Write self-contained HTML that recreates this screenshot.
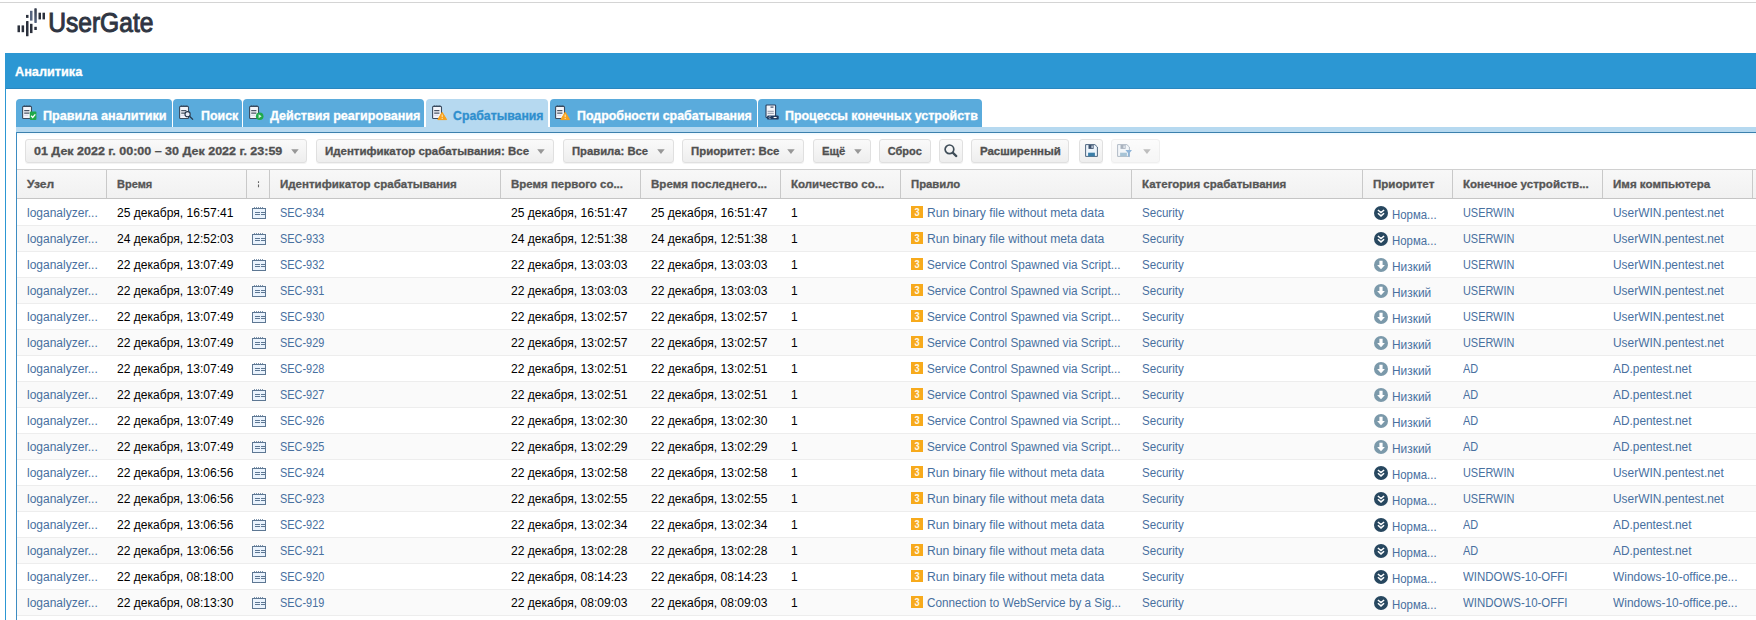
<!DOCTYPE html>
<html><head><meta charset="utf-8"><title>UserGate</title>
<style>
html,body{margin:0;padding:0;background:#fff;}
body{width:1756px;height:620px;overflow:hidden;position:relative;font-family:"Liberation Sans",sans-serif;font-size:12px;color:#000;}
div,span,svg{position:absolute;}
.t{white-space:pre;line-height:1;transform-origin:0 0;}
.tab{top:99px;height:28px;background:#5aabdc;border-radius:4px 4px 0 0;}
.tab.a{background:#b6d9f0;height:29px;}
.btn{top:139px;height:22px;border:1px solid #e0e0e0;border-radius:3px;background:linear-gradient(#fafafa,#eeeeee);box-shadow:0 1px 0 #f3f3f3;}
.btn.dis{opacity:.5;}
.sep{top:170px;width:1px;height:28px;background:#c9c9c9;}
.row{left:17px;width:1739px;height:25px;border-bottom:1px solid #ededed;background:#fff;}
.row.alt{background:#fafafa;}
.arr{width:0;height:0;border-left:3.7px solid transparent;border-right:3.7px solid transparent;border-top:4.7px solid #999;top:149.1px;}
</style></head><body>
<div style="left:0;top:2px;width:1756px;height:1px;background:#d4d4d4"></div>
<div style="left:5px;top:53px;width:1751px;height:35px;background:#2c97d3;border-bottom:1px solid #2b87bf"></div>
<div style="left:5px;top:88px;width:1px;height:532px;background:#2c97d3"></div>
<div style="left:16px;top:127px;width:1740px;height:5px;background:#b6d9f0"></div>
<div style="left:16px;top:132px;width:1740px;height:1px;background:#3b80ad"></div>
<div style="left:17px;top:133px;width:1739px;height:3px;background:linear-gradient(#eef9ff,#fff)"></div>
<div style="left:16px;top:132px;width:1px;height:488px;background:#3d8cc2"></div>
<div style="left:17px;top:169px;width:1739px;height:1px;background:#d0d0d0"></div>
<div style="left:17px;top:170px;width:1739px;height:28px;background:linear-gradient(#f8f8f8,#f1f1f1)"></div>
<div style="left:17px;top:198px;width:1739px;height:1px;background:#c5c5c5"></div>

<svg style="left:0;top:0" width="170" height="46" viewBox="0 0 170 46">
<g fill="#2b303c"><rect x="17.5" y="25.4" width="2.5" height="6.8"/><rect x="21.6" y="25.4" width="2.5" height="6.8"/>
<rect x="26" y="21" width="2.5" height="15.3" rx=".6"/><rect x="26" y="14.9" width="2.5" height="3"/>
<rect x="30" y="23.8" width="2.5" height="9.3"/><rect x="34.3" y="26.8" width="2.5" height="3.2"/>
<rect x="38.5" y="12.7" width="2.5" height="6.7"/><rect x="42.5" y="12.7" width="2.5" height="6.7"/></g>
<rect x="30" y="10.8" width="2.5" height="9.8" fill="#56647f"/>
<linearGradient id="lg" x1="0" y1="0" x2="0" y2="1"><stop offset="0" stop-color="#343b4b"/><stop offset="1" stop-color="#56647f"/></linearGradient>
<rect x="34.3" y="8.3" width="2.5" height="14.6" rx=".6" fill="url(#lg)"/>
<text x="48.2" y="31.7" font-family="Liberation Sans, sans-serif" font-size="27" fill="#2f3542" stroke="#2f3542" stroke-width="1" textLength="105.2" lengthAdjust="spacingAndGlyphs">UserGate</text>
</svg>
<div class="tab" style="left:16.2px;width:155.8px"></div>
<div class="tab" style="left:173.3px;width:68.5px"></div>
<div class="tab" style="left:243.3px;width:181.2px"></div>
<div class="tab a" style="left:426.4px;width:121.2px"></div>
<div class="tab" style="left:549.5px;width:207.1px"></div>
<div class="tab" style="left:758.2px;width:223.6px"></div>
<svg style="left:21.8px;top:104.6px" width="18" height="18" viewBox="0 0 18 18"><g><path d="M2.2 0v1.6M4.1 0v1.6M6 0v1.6M7.9 0v1.6" stroke="#34475c" stroke-width=".9"/><rect x=".6" y="1.5" width="8.9" height="12" rx=".8" fill="#f3f5fa" stroke="#3a4b5f" stroke-width="1.1"/><path d="M2.2 5.6h5.2M2.2 8.1h5.2" stroke="#4a5565" stroke-width="1.1"/><path d="M2.2 10.3h4" stroke="#d9d6ea" stroke-width="1"/></g><rect x="7.8" y="6.6" width="6.6" height="8.5" rx="1" fill="#1fa94b"/><path d="M9.1 10.8 10.7 12.5 13.3 9.4" fill="none" stroke="#fff" stroke-width="1.3"/></svg>
<svg style="left:179px;top:104.6px" width="18" height="18" viewBox="0 0 18 18"><g><path d="M2.2 0v1.6M4.1 0v1.6M6 0v1.6M7.9 0v1.6" stroke="#34475c" stroke-width=".9"/><rect x=".6" y="1.5" width="8.9" height="12" rx=".8" fill="#f3f5fa" stroke="#3a4b5f" stroke-width="1.1"/><path d="M2.2 5.6h5.2M2.2 8.1h5.2" stroke="#4a5565" stroke-width="1.1"/><path d="M2.2 10.3h4" stroke="#d9d6ea" stroke-width="1"/></g><circle cx="8.6" cy="9.2" r="2.6" fill="#e9eef8" stroke="#26364a" stroke-width="1.1"/><path d="M10.6 11.2 14 14.6" stroke="#26364a" stroke-width="1.3"/></svg>
<svg style="left:249px;top:104.6px" width="18" height="18" viewBox="0 0 18 18"><g><path d="M2.2 0v1.6M4.1 0v1.6M6 0v1.6M7.9 0v1.6" stroke="#34475c" stroke-width=".9"/><rect x=".6" y="1.5" width="8.9" height="12" rx=".8" fill="#f3f5fa" stroke="#3a4b5f" stroke-width="1.1"/><path d="M2.2 5.6h5.2M2.2 8.1h5.2" stroke="#4a5565" stroke-width="1.1"/><path d="M2.2 10.3h4" stroke="#d9d6ea" stroke-width="1"/></g><circle cx="10.7" cy="11.3" r="3.8" fill="#1fa94b"/><path d="M9.6 9.3v4l3-2z" fill="#d9f5e2"/></svg>
<svg style="left:431.8px;top:104.6px" width="18" height="18" viewBox="0 0 18 18"><g><path d="M2.2 0v1.6M4.1 0v1.6M6 0v1.6M7.9 0v1.6" stroke="#34475c" stroke-width=".9"/><rect x=".6" y="1.5" width="8.9" height="12" rx=".8" fill="#f3f5fa" stroke="#3a4b5f" stroke-width="1.1"/><path d="M2.2 5.6h5.2M2.2 8.1h5.2" stroke="#4a5565" stroke-width="1.1"/><path d="M2.2 10.3h4" stroke="#d9d6ea" stroke-width="1"/></g><g><path d="M10.2 7.3 14.6 14.6 5.8 14.6z" fill="#f7a11c" stroke="#f7a11c" stroke-width="1" stroke-linejoin="round"/><path d="M10.2 9.6v2.6M10.2 13.1v.9" stroke="#fde3b0" stroke-width="1.1"/></g></svg>
<svg style="left:555.4px;top:104.6px" width="18" height="18" viewBox="0 0 18 18"><g><path d="M2.2 0v1.6M4.1 0v1.6M6 0v1.6M7.9 0v1.6" stroke="#34475c" stroke-width=".9"/><rect x=".6" y="1.5" width="8.9" height="12" rx=".8" fill="#f3f5fa" stroke="#3a4b5f" stroke-width="1.1"/><path d="M2.2 5.6h5.2M2.2 8.1h5.2" stroke="#4a5565" stroke-width="1.1"/><path d="M2.2 10.3h4" stroke="#d9d6ea" stroke-width="1"/></g><g><path d="M10.2 7.3 14.6 14.6 5.8 14.6z" fill="#f7a11c" stroke="#f7a11c" stroke-width="1" stroke-linejoin="round"/><path d="M10.2 9.6v2.6M10.2 13.1v.9" stroke="#fde3b0" stroke-width="1.1"/></g></svg>
<svg style="left:764.8px;top:104.2px" width="18" height="18" viewBox="0 0 18 18"><rect x="1" y="1" width="9.6" height="12.6" rx=".8" fill="#f3f5fa" stroke="#2b4160" stroke-width="1.1"/><path d="M5.5 3.1h3" stroke="#2b4160" stroke-width="1.1"/><path d="M2.6 7.3h6.2M2.6 9.3h6.2" stroke="#8e97a8" stroke-width="1"/><rect x="2.1" y="11.4" width="11.6" height="4.2" rx="1.2" fill="#1f3b60"/><path d="M8.6 13.5h3" stroke="#fff" stroke-width="1.1"/><path d="M5.6 12.6a1.1 1.1 0 1 0 0 1.9" fill="none" stroke="#aab6c8" stroke-width=".8"/></svg>
<div class="btn" style="left:25px;width:279.5px"></div>
<svg style="left:290.6px;top:149px" width="9" height="6"><path d="M.2 .2h7.5L3.95 4.9z" fill="#979797"/></svg>
<div class="btn" style="left:316.2px;width:235.6px"></div>
<svg style="left:536.8px;top:149px" width="9" height="6"><path d="M.2 .2h7.5L3.95 4.9z" fill="#979797"/></svg>
<div class="btn" style="left:563.2px;width:108.6px"></div>
<svg style="left:656.9px;top:149px" width="9" height="6"><path d="M.2 .2h7.5L3.95 4.9z" fill="#979797"/></svg>
<div class="btn" style="left:682.1px;width:119.7px"></div>
<svg style="left:787.1px;top:149px" width="9" height="6"><path d="M.2 .2h7.5L3.95 4.9z" fill="#979797"/></svg>
<div class="btn" style="left:813.2px;width:55.4px"></div>
<svg style="left:853.9px;top:149px" width="9" height="6"><path d="M.2 .2h7.5L3.95 4.9z" fill="#979797"/></svg>
<div class="btn" style="left:879.2px;width:49.6px"></div>
<div class="btn" style="left:939.4px;width:21.4px"></div>
<div class="btn" style="left:971.2px;width:96.2px"></div>
<div class="btn" style="left:1079.2px;width:21.6px"></div>
<div class="btn dis" style="left:1111.3px;width:47.0px"></div>
<svg style="left:1143.1px;top:149px;opacity:.6" width="9" height="6"><path d="M.2 .2h7.5L3.95 4.9z" fill="#979797"/></svg>
<svg style="left:944px;top:144px" width="15" height="15" viewBox="0 0 15 15"><circle cx="5.45" cy="5.35" r="4.35" fill="none" stroke="#3f4d58" stroke-width="1.7"/><path d="M8.7 8.6 12.3 12.1" stroke="#3f4d58" stroke-width="2.2" stroke-linecap="round"/></svg>
<svg style="left:1085px;top:144px" width="14" height="14" viewBox="0 0 14 14"><path d="M.6 .6h9.3l2.5 2.4v9.4h-11.8z" fill="#edf5fc" stroke="#48607a" stroke-width=".95"/><rect x="3.5" y=".9" width="5.1" height="4" fill="#3d526e"/><rect x="6.5" y="1.5" width="1.2" height="2.6" fill="#dde7f2"/><rect x="3.1" y="8.7" width="6.8" height="3.6" fill="#3a7ea8"/></svg>
<svg style="left:1117.3px;top:144px" width="17" height="15" viewBox="0 0 17 15"><g opacity=".42"><path d="M.6 .6h9.3l2.5 2.4v9.4h-11.8z" fill="#edf5fc" stroke="#48607a" stroke-width=".95"/><rect x="3.5" y=".9" width="5.1" height="4" fill="#3d526e"/><rect x="6.5" y="1.5" width="1.2" height="2.6" fill="#dde7f2"/><rect x="3.1" y="8.7" width="6.8" height="3.6" fill="#3a7ea8"/></g><path d="M8.4 6h6.6l-2.4 3.1v4.2l-1.7-1.1v-3.1z" fill="#8fb5d8"/></svg>
<svg style="left:257px;top:181px" width="4" height="7" viewBox="0 0 4 7"><path d="M1.5 .3v1.8M1.5 3.6v2.6" stroke="#666" stroke-width="1.1"/></svg>
<div class="sep" style="left:106px"></div>
<div class="sep" style="left:246px"></div>
<div class="sep" style="left:269px"></div>
<div class="sep" style="left:500px"></div>
<div class="sep" style="left:640px"></div>
<div class="sep" style="left:780px"></div>
<div class="sep" style="left:900px"></div>
<div class="sep" style="left:1131px"></div>
<div class="sep" style="left:1362px"></div>
<div class="sep" style="left:1452px"></div>
<div class="sep" style="left:1602px"></div>
<div class="sep" style="left:1752px"></div>
<div class="row" style="top:200px"></div>
<div class="row alt" style="top:226px"></div>
<div class="row" style="top:252px"></div>
<div class="row alt" style="top:278px"></div>
<div class="row" style="top:304px"></div>
<div class="row alt" style="top:330px"></div>
<div class="row" style="top:356px"></div>
<div class="row alt" style="top:382px"></div>
<div class="row" style="top:408px"></div>
<div class="row alt" style="top:434px"></div>
<div class="row" style="top:460px"></div>
<div class="row alt" style="top:486px"></div>
<div class="row" style="top:512px"></div>
<div class="row alt" style="top:538px"></div>
<div class="row" style="top:564px"></div>
<div class="row alt" style="top:590px"></div>
<div class="row" style="top:616px"></div>
<svg style="left:251px;top:207px" width="16" height="13"><g shape-rendering="crispEdges"><path d="M3.5 0v2M5.5 0v2M7.5 0v2M9.5 0v2M11.5 0v2" stroke="#7f95ad" stroke-width="1"/><rect x="1.5" y="1.5" width="13" height="10" fill="#eaf3fd" stroke="#5d7793" stroke-width="1"/><path d="M3.5 5.5h5M9.5 5.5h4M3.5 7.5h5M9.5 7.5h4" stroke="#5d7793" stroke-width="1"/></g></svg>
<svg style="left:911px;top:206px" width="12" height="12"><g><rect width="12" height="12" fill="#f7aa1c"/><text x="6.7" y="9.7" font-family="Liberation Sans, sans-serif" font-size="10.3" font-weight="bold" text-anchor="middle" fill="#fff8e6" transform="scale(.9 1)">3</text></g></svg>
<svg style="left:1374px;top:206px" width="14" height="14"><g><circle cx="7" cy="7" r="7" fill="#27475f"/><path d="M3.9 4 7 6.6 10.1 4M3.9 7.3 7 9.9 10.1 7.3" fill="none" stroke="#fff" stroke-width="1.5"/></g></svg>
<svg style="left:251px;top:233px" width="16" height="13"><g shape-rendering="crispEdges"><path d="M3.5 0v2M5.5 0v2M7.5 0v2M9.5 0v2M11.5 0v2" stroke="#7f95ad" stroke-width="1"/><rect x="1.5" y="1.5" width="13" height="10" fill="#eaf3fd" stroke="#5d7793" stroke-width="1"/><path d="M3.5 5.5h5M9.5 5.5h4M3.5 7.5h5M9.5 7.5h4" stroke="#5d7793" stroke-width="1"/></g></svg>
<svg style="left:911px;top:232px" width="12" height="12"><g><rect width="12" height="12" fill="#f7aa1c"/><text x="6.7" y="9.7" font-family="Liberation Sans, sans-serif" font-size="10.3" font-weight="bold" text-anchor="middle" fill="#fff8e6" transform="scale(.9 1)">3</text></g></svg>
<svg style="left:1374px;top:232px" width="14" height="14"><g><circle cx="7" cy="7" r="7" fill="#27475f"/><path d="M3.9 4 7 6.6 10.1 4M3.9 7.3 7 9.9 10.1 7.3" fill="none" stroke="#fff" stroke-width="1.5"/></g></svg>
<svg style="left:251px;top:259px" width="16" height="13"><g shape-rendering="crispEdges"><path d="M3.5 0v2M5.5 0v2M7.5 0v2M9.5 0v2M11.5 0v2" stroke="#7f95ad" stroke-width="1"/><rect x="1.5" y="1.5" width="13" height="10" fill="#eaf3fd" stroke="#5d7793" stroke-width="1"/><path d="M3.5 5.5h5M9.5 5.5h4M3.5 7.5h5M9.5 7.5h4" stroke="#5d7793" stroke-width="1"/></g></svg>
<svg style="left:911px;top:258px" width="12" height="12"><g><rect width="12" height="12" fill="#f7aa1c"/><text x="6.7" y="9.7" font-family="Liberation Sans, sans-serif" font-size="10.3" font-weight="bold" text-anchor="middle" fill="#fff8e6" transform="scale(.9 1)">3</text></g></svg>
<svg style="left:1374px;top:258px" width="14" height="14"><g><circle cx="7" cy="7" r="7" fill="#7b99aa"/><path d="M5.4 2.8h3.2v4.1h2.3L7 11.2 3.1 6.9h2.3z" fill="#fff"/></g></svg>
<svg style="left:251px;top:285px" width="16" height="13"><g shape-rendering="crispEdges"><path d="M3.5 0v2M5.5 0v2M7.5 0v2M9.5 0v2M11.5 0v2" stroke="#7f95ad" stroke-width="1"/><rect x="1.5" y="1.5" width="13" height="10" fill="#eaf3fd" stroke="#5d7793" stroke-width="1"/><path d="M3.5 5.5h5M9.5 5.5h4M3.5 7.5h5M9.5 7.5h4" stroke="#5d7793" stroke-width="1"/></g></svg>
<svg style="left:911px;top:284px" width="12" height="12"><g><rect width="12" height="12" fill="#f7aa1c"/><text x="6.7" y="9.7" font-family="Liberation Sans, sans-serif" font-size="10.3" font-weight="bold" text-anchor="middle" fill="#fff8e6" transform="scale(.9 1)">3</text></g></svg>
<svg style="left:1374px;top:284px" width="14" height="14"><g><circle cx="7" cy="7" r="7" fill="#7b99aa"/><path d="M5.4 2.8h3.2v4.1h2.3L7 11.2 3.1 6.9h2.3z" fill="#fff"/></g></svg>
<svg style="left:251px;top:311px" width="16" height="13"><g shape-rendering="crispEdges"><path d="M3.5 0v2M5.5 0v2M7.5 0v2M9.5 0v2M11.5 0v2" stroke="#7f95ad" stroke-width="1"/><rect x="1.5" y="1.5" width="13" height="10" fill="#eaf3fd" stroke="#5d7793" stroke-width="1"/><path d="M3.5 5.5h5M9.5 5.5h4M3.5 7.5h5M9.5 7.5h4" stroke="#5d7793" stroke-width="1"/></g></svg>
<svg style="left:911px;top:310px" width="12" height="12"><g><rect width="12" height="12" fill="#f7aa1c"/><text x="6.7" y="9.7" font-family="Liberation Sans, sans-serif" font-size="10.3" font-weight="bold" text-anchor="middle" fill="#fff8e6" transform="scale(.9 1)">3</text></g></svg>
<svg style="left:1374px;top:310px" width="14" height="14"><g><circle cx="7" cy="7" r="7" fill="#7b99aa"/><path d="M5.4 2.8h3.2v4.1h2.3L7 11.2 3.1 6.9h2.3z" fill="#fff"/></g></svg>
<svg style="left:251px;top:337px" width="16" height="13"><g shape-rendering="crispEdges"><path d="M3.5 0v2M5.5 0v2M7.5 0v2M9.5 0v2M11.5 0v2" stroke="#7f95ad" stroke-width="1"/><rect x="1.5" y="1.5" width="13" height="10" fill="#eaf3fd" stroke="#5d7793" stroke-width="1"/><path d="M3.5 5.5h5M9.5 5.5h4M3.5 7.5h5M9.5 7.5h4" stroke="#5d7793" stroke-width="1"/></g></svg>
<svg style="left:911px;top:336px" width="12" height="12"><g><rect width="12" height="12" fill="#f7aa1c"/><text x="6.7" y="9.7" font-family="Liberation Sans, sans-serif" font-size="10.3" font-weight="bold" text-anchor="middle" fill="#fff8e6" transform="scale(.9 1)">3</text></g></svg>
<svg style="left:1374px;top:336px" width="14" height="14"><g><circle cx="7" cy="7" r="7" fill="#7b99aa"/><path d="M5.4 2.8h3.2v4.1h2.3L7 11.2 3.1 6.9h2.3z" fill="#fff"/></g></svg>
<svg style="left:251px;top:363px" width="16" height="13"><g shape-rendering="crispEdges"><path d="M3.5 0v2M5.5 0v2M7.5 0v2M9.5 0v2M11.5 0v2" stroke="#7f95ad" stroke-width="1"/><rect x="1.5" y="1.5" width="13" height="10" fill="#eaf3fd" stroke="#5d7793" stroke-width="1"/><path d="M3.5 5.5h5M9.5 5.5h4M3.5 7.5h5M9.5 7.5h4" stroke="#5d7793" stroke-width="1"/></g></svg>
<svg style="left:911px;top:362px" width="12" height="12"><g><rect width="12" height="12" fill="#f7aa1c"/><text x="6.7" y="9.7" font-family="Liberation Sans, sans-serif" font-size="10.3" font-weight="bold" text-anchor="middle" fill="#fff8e6" transform="scale(.9 1)">3</text></g></svg>
<svg style="left:1374px;top:362px" width="14" height="14"><g><circle cx="7" cy="7" r="7" fill="#7b99aa"/><path d="M5.4 2.8h3.2v4.1h2.3L7 11.2 3.1 6.9h2.3z" fill="#fff"/></g></svg>
<svg style="left:251px;top:389px" width="16" height="13"><g shape-rendering="crispEdges"><path d="M3.5 0v2M5.5 0v2M7.5 0v2M9.5 0v2M11.5 0v2" stroke="#7f95ad" stroke-width="1"/><rect x="1.5" y="1.5" width="13" height="10" fill="#eaf3fd" stroke="#5d7793" stroke-width="1"/><path d="M3.5 5.5h5M9.5 5.5h4M3.5 7.5h5M9.5 7.5h4" stroke="#5d7793" stroke-width="1"/></g></svg>
<svg style="left:911px;top:388px" width="12" height="12"><g><rect width="12" height="12" fill="#f7aa1c"/><text x="6.7" y="9.7" font-family="Liberation Sans, sans-serif" font-size="10.3" font-weight="bold" text-anchor="middle" fill="#fff8e6" transform="scale(.9 1)">3</text></g></svg>
<svg style="left:1374px;top:388px" width="14" height="14"><g><circle cx="7" cy="7" r="7" fill="#7b99aa"/><path d="M5.4 2.8h3.2v4.1h2.3L7 11.2 3.1 6.9h2.3z" fill="#fff"/></g></svg>
<svg style="left:251px;top:415px" width="16" height="13"><g shape-rendering="crispEdges"><path d="M3.5 0v2M5.5 0v2M7.5 0v2M9.5 0v2M11.5 0v2" stroke="#7f95ad" stroke-width="1"/><rect x="1.5" y="1.5" width="13" height="10" fill="#eaf3fd" stroke="#5d7793" stroke-width="1"/><path d="M3.5 5.5h5M9.5 5.5h4M3.5 7.5h5M9.5 7.5h4" stroke="#5d7793" stroke-width="1"/></g></svg>
<svg style="left:911px;top:414px" width="12" height="12"><g><rect width="12" height="12" fill="#f7aa1c"/><text x="6.7" y="9.7" font-family="Liberation Sans, sans-serif" font-size="10.3" font-weight="bold" text-anchor="middle" fill="#fff8e6" transform="scale(.9 1)">3</text></g></svg>
<svg style="left:1374px;top:414px" width="14" height="14"><g><circle cx="7" cy="7" r="7" fill="#7b99aa"/><path d="M5.4 2.8h3.2v4.1h2.3L7 11.2 3.1 6.9h2.3z" fill="#fff"/></g></svg>
<svg style="left:251px;top:441px" width="16" height="13"><g shape-rendering="crispEdges"><path d="M3.5 0v2M5.5 0v2M7.5 0v2M9.5 0v2M11.5 0v2" stroke="#7f95ad" stroke-width="1"/><rect x="1.5" y="1.5" width="13" height="10" fill="#eaf3fd" stroke="#5d7793" stroke-width="1"/><path d="M3.5 5.5h5M9.5 5.5h4M3.5 7.5h5M9.5 7.5h4" stroke="#5d7793" stroke-width="1"/></g></svg>
<svg style="left:911px;top:440px" width="12" height="12"><g><rect width="12" height="12" fill="#f7aa1c"/><text x="6.7" y="9.7" font-family="Liberation Sans, sans-serif" font-size="10.3" font-weight="bold" text-anchor="middle" fill="#fff8e6" transform="scale(.9 1)">3</text></g></svg>
<svg style="left:1374px;top:440px" width="14" height="14"><g><circle cx="7" cy="7" r="7" fill="#7b99aa"/><path d="M5.4 2.8h3.2v4.1h2.3L7 11.2 3.1 6.9h2.3z" fill="#fff"/></g></svg>
<svg style="left:251px;top:467px" width="16" height="13"><g shape-rendering="crispEdges"><path d="M3.5 0v2M5.5 0v2M7.5 0v2M9.5 0v2M11.5 0v2" stroke="#7f95ad" stroke-width="1"/><rect x="1.5" y="1.5" width="13" height="10" fill="#eaf3fd" stroke="#5d7793" stroke-width="1"/><path d="M3.5 5.5h5M9.5 5.5h4M3.5 7.5h5M9.5 7.5h4" stroke="#5d7793" stroke-width="1"/></g></svg>
<svg style="left:911px;top:466px" width="12" height="12"><g><rect width="12" height="12" fill="#f7aa1c"/><text x="6.7" y="9.7" font-family="Liberation Sans, sans-serif" font-size="10.3" font-weight="bold" text-anchor="middle" fill="#fff8e6" transform="scale(.9 1)">3</text></g></svg>
<svg style="left:1374px;top:466px" width="14" height="14"><g><circle cx="7" cy="7" r="7" fill="#27475f"/><path d="M3.9 4 7 6.6 10.1 4M3.9 7.3 7 9.9 10.1 7.3" fill="none" stroke="#fff" stroke-width="1.5"/></g></svg>
<svg style="left:251px;top:493px" width="16" height="13"><g shape-rendering="crispEdges"><path d="M3.5 0v2M5.5 0v2M7.5 0v2M9.5 0v2M11.5 0v2" stroke="#7f95ad" stroke-width="1"/><rect x="1.5" y="1.5" width="13" height="10" fill="#eaf3fd" stroke="#5d7793" stroke-width="1"/><path d="M3.5 5.5h5M9.5 5.5h4M3.5 7.5h5M9.5 7.5h4" stroke="#5d7793" stroke-width="1"/></g></svg>
<svg style="left:911px;top:492px" width="12" height="12"><g><rect width="12" height="12" fill="#f7aa1c"/><text x="6.7" y="9.7" font-family="Liberation Sans, sans-serif" font-size="10.3" font-weight="bold" text-anchor="middle" fill="#fff8e6" transform="scale(.9 1)">3</text></g></svg>
<svg style="left:1374px;top:492px" width="14" height="14"><g><circle cx="7" cy="7" r="7" fill="#27475f"/><path d="M3.9 4 7 6.6 10.1 4M3.9 7.3 7 9.9 10.1 7.3" fill="none" stroke="#fff" stroke-width="1.5"/></g></svg>
<svg style="left:251px;top:519px" width="16" height="13"><g shape-rendering="crispEdges"><path d="M3.5 0v2M5.5 0v2M7.5 0v2M9.5 0v2M11.5 0v2" stroke="#7f95ad" stroke-width="1"/><rect x="1.5" y="1.5" width="13" height="10" fill="#eaf3fd" stroke="#5d7793" stroke-width="1"/><path d="M3.5 5.5h5M9.5 5.5h4M3.5 7.5h5M9.5 7.5h4" stroke="#5d7793" stroke-width="1"/></g></svg>
<svg style="left:911px;top:518px" width="12" height="12"><g><rect width="12" height="12" fill="#f7aa1c"/><text x="6.7" y="9.7" font-family="Liberation Sans, sans-serif" font-size="10.3" font-weight="bold" text-anchor="middle" fill="#fff8e6" transform="scale(.9 1)">3</text></g></svg>
<svg style="left:1374px;top:518px" width="14" height="14"><g><circle cx="7" cy="7" r="7" fill="#27475f"/><path d="M3.9 4 7 6.6 10.1 4M3.9 7.3 7 9.9 10.1 7.3" fill="none" stroke="#fff" stroke-width="1.5"/></g></svg>
<svg style="left:251px;top:545px" width="16" height="13"><g shape-rendering="crispEdges"><path d="M3.5 0v2M5.5 0v2M7.5 0v2M9.5 0v2M11.5 0v2" stroke="#7f95ad" stroke-width="1"/><rect x="1.5" y="1.5" width="13" height="10" fill="#eaf3fd" stroke="#5d7793" stroke-width="1"/><path d="M3.5 5.5h5M9.5 5.5h4M3.5 7.5h5M9.5 7.5h4" stroke="#5d7793" stroke-width="1"/></g></svg>
<svg style="left:911px;top:544px" width="12" height="12"><g><rect width="12" height="12" fill="#f7aa1c"/><text x="6.7" y="9.7" font-family="Liberation Sans, sans-serif" font-size="10.3" font-weight="bold" text-anchor="middle" fill="#fff8e6" transform="scale(.9 1)">3</text></g></svg>
<svg style="left:1374px;top:544px" width="14" height="14"><g><circle cx="7" cy="7" r="7" fill="#27475f"/><path d="M3.9 4 7 6.6 10.1 4M3.9 7.3 7 9.9 10.1 7.3" fill="none" stroke="#fff" stroke-width="1.5"/></g></svg>
<svg style="left:251px;top:571px" width="16" height="13"><g shape-rendering="crispEdges"><path d="M3.5 0v2M5.5 0v2M7.5 0v2M9.5 0v2M11.5 0v2" stroke="#7f95ad" stroke-width="1"/><rect x="1.5" y="1.5" width="13" height="10" fill="#eaf3fd" stroke="#5d7793" stroke-width="1"/><path d="M3.5 5.5h5M9.5 5.5h4M3.5 7.5h5M9.5 7.5h4" stroke="#5d7793" stroke-width="1"/></g></svg>
<svg style="left:911px;top:570px" width="12" height="12"><g><rect width="12" height="12" fill="#f7aa1c"/><text x="6.7" y="9.7" font-family="Liberation Sans, sans-serif" font-size="10.3" font-weight="bold" text-anchor="middle" fill="#fff8e6" transform="scale(.9 1)">3</text></g></svg>
<svg style="left:1374px;top:570px" width="14" height="14"><g><circle cx="7" cy="7" r="7" fill="#27475f"/><path d="M3.9 4 7 6.6 10.1 4M3.9 7.3 7 9.9 10.1 7.3" fill="none" stroke="#fff" stroke-width="1.5"/></g></svg>
<svg style="left:251px;top:597px" width="16" height="13"><g shape-rendering="crispEdges"><path d="M3.5 0v2M5.5 0v2M7.5 0v2M9.5 0v2M11.5 0v2" stroke="#7f95ad" stroke-width="1"/><rect x="1.5" y="1.5" width="13" height="10" fill="#eaf3fd" stroke="#5d7793" stroke-width="1"/><path d="M3.5 5.5h5M9.5 5.5h4M3.5 7.5h5M9.5 7.5h4" stroke="#5d7793" stroke-width="1"/></g></svg>
<svg style="left:911px;top:596px" width="12" height="12"><g><rect width="12" height="12" fill="#f7aa1c"/><text x="6.7" y="9.7" font-family="Liberation Sans, sans-serif" font-size="10.3" font-weight="bold" text-anchor="middle" fill="#fff8e6" transform="scale(.9 1)">3</text></g></svg>
<svg style="left:1374px;top:596px" width="14" height="14"><g><circle cx="7" cy="7" r="7" fill="#27475f"/><path d="M3.9 4 7 6.6 10.1 4M3.9 7.3 7 9.9 10.1 7.3" fill="none" stroke="#fff" stroke-width="1.5"/></g></svg>
<span class="t" style="left:14.80px;top:66px;font-size:12px;color:#ffffff;font-weight:bold;-webkit-text-stroke:.3px;transform:scaleX(1.0593);">Аналитика</span>
<span class="t" style="left:43.25px;top:110px;font-size:12px;color:#ffffff;font-weight:bold;-webkit-text-stroke:.3px;transform:scaleX(1.0537);">Правила аналитики</span>
<span class="t" style="left:200.50px;top:110px;font-size:12px;color:#ffffff;font-weight:bold;-webkit-text-stroke:.3px;transform:scaleX(1.0357);">Поиск</span>
<span class="t" style="left:270.00px;top:110px;font-size:12px;color:#ffffff;font-weight:bold;-webkit-text-stroke:.3px;transform:scaleX(1.0465);">Действия реагирования</span>
<span class="t" style="left:453.00px;top:110px;font-size:12px;color:#2f8fce;font-weight:bold;-webkit-text-stroke:.3px;transform:scaleX(1.0242);">Срабатывания</span>
<span class="t" style="left:577.00px;top:110px;font-size:12px;color:#ffffff;font-weight:bold;-webkit-text-stroke:.3px;transform:scaleX(1.0308);">Подробности срабатывания</span>
<span class="t" style="left:785.00px;top:110px;font-size:12px;color:#ffffff;font-weight:bold;-webkit-text-stroke:.3px;transform:scaleX(1.0350);">Процессы конечных устройств</span>
<span class="t" style="left:33.50px;top:146px;font-size:11px;color:#505050;font-weight:bold;-webkit-text-stroke:.3px;transform:scaleX(1.1357);">01 Дек 2022 г. 00:00 – 30 Дек 2022 г. 23:59</span>
<span class="t" style="left:325.00px;top:146px;font-size:11px;color:#505050;font-weight:bold;-webkit-text-stroke:.3px;transform:scaleX(1.0429);">Идентификатор срабатывания: Все</span>
<span class="t" style="left:572.00px;top:146px;font-size:11px;color:#505050;font-weight:bold;-webkit-text-stroke:.3px;transform:scaleX(1.0238);">Правила: Все</span>
<span class="t" style="left:690.75px;top:146px;font-size:11px;color:#505050;font-weight:bold;-webkit-text-stroke:.3px;transform:scaleX(1.0360);">Приоритет: Все</span>
<span class="t" style="left:822.00px;top:146px;font-size:11px;color:#505050;font-weight:bold;-webkit-text-stroke:.3px;transform:scaleX(1.0242);">Ещё</span>
<span class="t" style="left:887.75px;top:146px;font-size:11px;color:#505050;font-weight:bold;-webkit-text-stroke:.3px;">Сброс</span>
<span class="t" style="left:980.00px;top:146px;font-size:11px;color:#505050;font-weight:bold;-webkit-text-stroke:.3px;transform:scaleX(1.0407);">Расширенный</span>
<span class="t" style="left:26.50px;top:179px;font-size:11px;color:#565656;font-weight:bold;-webkit-text-stroke:.3px;transform:scaleX(1.0936);">Узел</span>
<span class="t" style="left:117.00px;top:179px;font-size:11px;color:#565656;font-weight:bold;-webkit-text-stroke:.3px;">Время</span>
<span class="t" style="left:279.80px;top:179px;font-size:11px;color:#565656;font-weight:bold;-webkit-text-stroke:.3px;transform:scaleX(1.0476);">Идентификатор срабатывания</span>
<span class="t" style="left:511.00px;top:179px;font-size:11px;color:#565656;font-weight:bold;-webkit-text-stroke:.3px;transform:scaleX(1.0438);">Время первого со...</span>
<span class="t" style="left:651.00px;top:179px;font-size:11px;color:#565656;font-weight:bold;-webkit-text-stroke:.3px;transform:scaleX(1.0490);">Время последнего...</span>
<span class="t" style="left:790.90px;top:179px;font-size:11px;color:#565656;font-weight:bold;-webkit-text-stroke:.3px;transform:scaleX(1.0463);">Количество со...</span>
<span class="t" style="left:911.00px;top:179px;font-size:11px;color:#565656;font-weight:bold;-webkit-text-stroke:.3px;transform:scaleX(1.0304);">Правило</span>
<span class="t" style="left:1142.00px;top:179px;font-size:11px;color:#565656;font-weight:bold;-webkit-text-stroke:.3px;transform:scaleX(1.0472);">Категория срабатывания</span>
<span class="t" style="left:1373.00px;top:179px;font-size:11px;color:#565656;font-weight:bold;-webkit-text-stroke:.3px;transform:scaleX(1.0507);">Приоритет</span>
<span class="t" style="left:1463.00px;top:179px;font-size:11px;color:#565656;font-weight:bold;-webkit-text-stroke:.3px;transform:scaleX(1.0497);">Конечное устройств...</span>
<span class="t" style="left:1613.00px;top:179px;font-size:11px;color:#565656;font-weight:bold;-webkit-text-stroke:.3px;transform:scaleX(1.0522);">Имя компьютера</span>
<span class="t" style="left:27.00px;top:207px;font-size:12px;color:#48709f;">loganalyzer...</span>
<span class="t" style="left:116.90px;top:207px;font-size:12px;color:#000;transform:scaleX(1.0057);">25 декабря, 16:57:41</span>
<span class="t" style="left:279.70px;top:207px;font-size:12px;color:#48709f;transform:scaleX(0.9096);">SEC-934</span>
<span class="t" style="left:511.00px;top:207px;font-size:12px;color:#000;transform:scaleX(1.0057);">25 декабря, 16:51:47</span>
<span class="t" style="left:651.00px;top:207px;font-size:12px;color:#000;transform:scaleX(1.0057);">25 декабря, 16:51:47</span>
<span class="t" style="left:791.00px;top:207px;font-size:12px;color:#000;">1</span>
<span class="t" style="left:926.70px;top:207px;font-size:12px;color:#48709f;transform:scaleX(1.0145);">Run binary file without meta data</span>
<span class="t" style="left:1142.00px;top:207px;font-size:12px;color:#48709f;transform:scaleX(0.9640);">Security</span>
<span class="t" style="left:1392.00px;top:209px;font-size:12px;color:#48709f;transform:scaleX(0.9499);">Норма...</span>
<span class="t" style="left:1462.90px;top:207px;font-size:12px;color:#48709f;transform:scaleX(0.9087);">USERWIN</span>
<span class="t" style="left:1612.90px;top:207px;font-size:12px;color:#48709f;transform:scaleX(0.9948);">UserWIN.pentest.net</span>
<span class="t" style="left:27.00px;top:233px;font-size:12px;color:#48709f;">loganalyzer...</span>
<span class="t" style="left:116.90px;top:233px;font-size:12px;color:#000;transform:scaleX(1.0057);">24 декабря, 12:52:03</span>
<span class="t" style="left:279.70px;top:233px;font-size:12px;color:#48709f;transform:scaleX(0.9096);">SEC-933</span>
<span class="t" style="left:511.00px;top:233px;font-size:12px;color:#000;transform:scaleX(1.0057);">24 декабря, 12:51:38</span>
<span class="t" style="left:651.00px;top:233px;font-size:12px;color:#000;transform:scaleX(1.0057);">24 декабря, 12:51:38</span>
<span class="t" style="left:791.00px;top:233px;font-size:12px;color:#000;">1</span>
<span class="t" style="left:926.70px;top:233px;font-size:12px;color:#48709f;transform:scaleX(1.0145);">Run binary file without meta data</span>
<span class="t" style="left:1142.00px;top:233px;font-size:12px;color:#48709f;transform:scaleX(0.9640);">Security</span>
<span class="t" style="left:1392.00px;top:235px;font-size:12px;color:#48709f;transform:scaleX(0.9499);">Норма...</span>
<span class="t" style="left:1462.90px;top:233px;font-size:12px;color:#48709f;transform:scaleX(0.9087);">USERWIN</span>
<span class="t" style="left:1612.90px;top:233px;font-size:12px;color:#48709f;transform:scaleX(0.9948);">UserWIN.pentest.net</span>
<span class="t" style="left:27.00px;top:259px;font-size:12px;color:#48709f;">loganalyzer...</span>
<span class="t" style="left:116.90px;top:259px;font-size:12px;color:#000;transform:scaleX(1.0057);">22 декабря, 13:07:49</span>
<span class="t" style="left:279.70px;top:259px;font-size:12px;color:#48709f;transform:scaleX(0.9096);">SEC-932</span>
<span class="t" style="left:511.00px;top:259px;font-size:12px;color:#000;transform:scaleX(1.0057);">22 декабря, 13:03:03</span>
<span class="t" style="left:651.00px;top:259px;font-size:12px;color:#000;transform:scaleX(1.0057);">22 декабря, 13:03:03</span>
<span class="t" style="left:791.00px;top:259px;font-size:12px;color:#000;">1</span>
<span class="t" style="left:926.70px;top:259px;font-size:12px;color:#48709f;transform:scaleX(0.9771);">Service Control Spawned via Script...</span>
<span class="t" style="left:1142.00px;top:259px;font-size:12px;color:#48709f;transform:scaleX(0.9640);">Security</span>
<span class="t" style="left:1392.00px;top:261px;font-size:12px;color:#48709f;transform:scaleX(0.9916);">Низкий</span>
<span class="t" style="left:1462.90px;top:259px;font-size:12px;color:#48709f;transform:scaleX(0.9087);">USERWIN</span>
<span class="t" style="left:1612.90px;top:259px;font-size:12px;color:#48709f;transform:scaleX(0.9948);">UserWIN.pentest.net</span>
<span class="t" style="left:27.00px;top:285px;font-size:12px;color:#48709f;">loganalyzer...</span>
<span class="t" style="left:116.90px;top:285px;font-size:12px;color:#000;transform:scaleX(1.0057);">22 декабря, 13:07:49</span>
<span class="t" style="left:279.70px;top:285px;font-size:12px;color:#48709f;transform:scaleX(0.9096);">SEC-931</span>
<span class="t" style="left:511.00px;top:285px;font-size:12px;color:#000;transform:scaleX(1.0057);">22 декабря, 13:03:03</span>
<span class="t" style="left:651.00px;top:285px;font-size:12px;color:#000;transform:scaleX(1.0057);">22 декабря, 13:03:03</span>
<span class="t" style="left:791.00px;top:285px;font-size:12px;color:#000;">1</span>
<span class="t" style="left:926.70px;top:285px;font-size:12px;color:#48709f;transform:scaleX(0.9771);">Service Control Spawned via Script...</span>
<span class="t" style="left:1142.00px;top:285px;font-size:12px;color:#48709f;transform:scaleX(0.9640);">Security</span>
<span class="t" style="left:1392.00px;top:287px;font-size:12px;color:#48709f;transform:scaleX(0.9916);">Низкий</span>
<span class="t" style="left:1462.90px;top:285px;font-size:12px;color:#48709f;transform:scaleX(0.9087);">USERWIN</span>
<span class="t" style="left:1612.90px;top:285px;font-size:12px;color:#48709f;transform:scaleX(0.9948);">UserWIN.pentest.net</span>
<span class="t" style="left:27.00px;top:311px;font-size:12px;color:#48709f;">loganalyzer...</span>
<span class="t" style="left:116.90px;top:311px;font-size:12px;color:#000;transform:scaleX(1.0057);">22 декабря, 13:07:49</span>
<span class="t" style="left:279.70px;top:311px;font-size:12px;color:#48709f;transform:scaleX(0.9096);">SEC-930</span>
<span class="t" style="left:511.00px;top:311px;font-size:12px;color:#000;transform:scaleX(1.0057);">22 декабря, 13:02:57</span>
<span class="t" style="left:651.00px;top:311px;font-size:12px;color:#000;transform:scaleX(1.0057);">22 декабря, 13:02:57</span>
<span class="t" style="left:791.00px;top:311px;font-size:12px;color:#000;">1</span>
<span class="t" style="left:926.70px;top:311px;font-size:12px;color:#48709f;transform:scaleX(0.9771);">Service Control Spawned via Script...</span>
<span class="t" style="left:1142.00px;top:311px;font-size:12px;color:#48709f;transform:scaleX(0.9640);">Security</span>
<span class="t" style="left:1392.00px;top:313px;font-size:12px;color:#48709f;transform:scaleX(0.9916);">Низкий</span>
<span class="t" style="left:1462.90px;top:311px;font-size:12px;color:#48709f;transform:scaleX(0.9087);">USERWIN</span>
<span class="t" style="left:1612.90px;top:311px;font-size:12px;color:#48709f;transform:scaleX(0.9948);">UserWIN.pentest.net</span>
<span class="t" style="left:27.00px;top:337px;font-size:12px;color:#48709f;">loganalyzer...</span>
<span class="t" style="left:116.90px;top:337px;font-size:12px;color:#000;transform:scaleX(1.0057);">22 декабря, 13:07:49</span>
<span class="t" style="left:279.70px;top:337px;font-size:12px;color:#48709f;transform:scaleX(0.9096);">SEC-929</span>
<span class="t" style="left:511.00px;top:337px;font-size:12px;color:#000;transform:scaleX(1.0057);">22 декабря, 13:02:57</span>
<span class="t" style="left:651.00px;top:337px;font-size:12px;color:#000;transform:scaleX(1.0057);">22 декабря, 13:02:57</span>
<span class="t" style="left:791.00px;top:337px;font-size:12px;color:#000;">1</span>
<span class="t" style="left:926.70px;top:337px;font-size:12px;color:#48709f;transform:scaleX(0.9771);">Service Control Spawned via Script...</span>
<span class="t" style="left:1142.00px;top:337px;font-size:12px;color:#48709f;transform:scaleX(0.9640);">Security</span>
<span class="t" style="left:1392.00px;top:339px;font-size:12px;color:#48709f;transform:scaleX(0.9916);">Низкий</span>
<span class="t" style="left:1462.90px;top:337px;font-size:12px;color:#48709f;transform:scaleX(0.9087);">USERWIN</span>
<span class="t" style="left:1612.90px;top:337px;font-size:12px;color:#48709f;transform:scaleX(0.9948);">UserWIN.pentest.net</span>
<span class="t" style="left:27.00px;top:363px;font-size:12px;color:#48709f;">loganalyzer...</span>
<span class="t" style="left:116.90px;top:363px;font-size:12px;color:#000;transform:scaleX(1.0057);">22 декабря, 13:07:49</span>
<span class="t" style="left:279.70px;top:363px;font-size:12px;color:#48709f;transform:scaleX(0.9096);">SEC-928</span>
<span class="t" style="left:511.00px;top:363px;font-size:12px;color:#000;transform:scaleX(1.0057);">22 декабря, 13:02:51</span>
<span class="t" style="left:651.00px;top:363px;font-size:12px;color:#000;transform:scaleX(1.0057);">22 декабря, 13:02:51</span>
<span class="t" style="left:791.00px;top:363px;font-size:12px;color:#000;">1</span>
<span class="t" style="left:926.70px;top:363px;font-size:12px;color:#48709f;transform:scaleX(0.9771);">Service Control Spawned via Script...</span>
<span class="t" style="left:1142.00px;top:363px;font-size:12px;color:#48709f;transform:scaleX(0.9640);">Security</span>
<span class="t" style="left:1392.00px;top:365px;font-size:12px;color:#48709f;transform:scaleX(0.9916);">Низкий</span>
<span class="t" style="left:1462.90px;top:363px;font-size:12px;color:#48709f;transform:scaleX(0.9117);">AD</span>
<span class="t" style="left:1612.90px;top:363px;font-size:12px;color:#48709f;transform:scaleX(0.9888);">AD.pentest.net</span>
<span class="t" style="left:27.00px;top:389px;font-size:12px;color:#48709f;">loganalyzer...</span>
<span class="t" style="left:116.90px;top:389px;font-size:12px;color:#000;transform:scaleX(1.0057);">22 декабря, 13:07:49</span>
<span class="t" style="left:279.70px;top:389px;font-size:12px;color:#48709f;transform:scaleX(0.9096);">SEC-927</span>
<span class="t" style="left:511.00px;top:389px;font-size:12px;color:#000;transform:scaleX(1.0057);">22 декабря, 13:02:51</span>
<span class="t" style="left:651.00px;top:389px;font-size:12px;color:#000;transform:scaleX(1.0057);">22 декабря, 13:02:51</span>
<span class="t" style="left:791.00px;top:389px;font-size:12px;color:#000;">1</span>
<span class="t" style="left:926.70px;top:389px;font-size:12px;color:#48709f;transform:scaleX(0.9771);">Service Control Spawned via Script...</span>
<span class="t" style="left:1142.00px;top:389px;font-size:12px;color:#48709f;transform:scaleX(0.9640);">Security</span>
<span class="t" style="left:1392.00px;top:391px;font-size:12px;color:#48709f;transform:scaleX(0.9916);">Низкий</span>
<span class="t" style="left:1462.90px;top:389px;font-size:12px;color:#48709f;transform:scaleX(0.9117);">AD</span>
<span class="t" style="left:1612.90px;top:389px;font-size:12px;color:#48709f;transform:scaleX(0.9888);">AD.pentest.net</span>
<span class="t" style="left:27.00px;top:415px;font-size:12px;color:#48709f;">loganalyzer...</span>
<span class="t" style="left:116.90px;top:415px;font-size:12px;color:#000;transform:scaleX(1.0057);">22 декабря, 13:07:49</span>
<span class="t" style="left:279.70px;top:415px;font-size:12px;color:#48709f;transform:scaleX(0.9096);">SEC-926</span>
<span class="t" style="left:511.00px;top:415px;font-size:12px;color:#000;transform:scaleX(1.0057);">22 декабря, 13:02:30</span>
<span class="t" style="left:651.00px;top:415px;font-size:12px;color:#000;transform:scaleX(1.0057);">22 декабря, 13:02:30</span>
<span class="t" style="left:791.00px;top:415px;font-size:12px;color:#000;">1</span>
<span class="t" style="left:926.70px;top:415px;font-size:12px;color:#48709f;transform:scaleX(0.9771);">Service Control Spawned via Script...</span>
<span class="t" style="left:1142.00px;top:415px;font-size:12px;color:#48709f;transform:scaleX(0.9640);">Security</span>
<span class="t" style="left:1392.00px;top:417px;font-size:12px;color:#48709f;transform:scaleX(0.9916);">Низкий</span>
<span class="t" style="left:1462.90px;top:415px;font-size:12px;color:#48709f;transform:scaleX(0.9117);">AD</span>
<span class="t" style="left:1612.90px;top:415px;font-size:12px;color:#48709f;transform:scaleX(0.9888);">AD.pentest.net</span>
<span class="t" style="left:27.00px;top:441px;font-size:12px;color:#48709f;">loganalyzer...</span>
<span class="t" style="left:116.90px;top:441px;font-size:12px;color:#000;transform:scaleX(1.0057);">22 декабря, 13:07:49</span>
<span class="t" style="left:279.70px;top:441px;font-size:12px;color:#48709f;transform:scaleX(0.9096);">SEC-925</span>
<span class="t" style="left:511.00px;top:441px;font-size:12px;color:#000;transform:scaleX(1.0057);">22 декабря, 13:02:29</span>
<span class="t" style="left:651.00px;top:441px;font-size:12px;color:#000;transform:scaleX(1.0057);">22 декабря, 13:02:29</span>
<span class="t" style="left:791.00px;top:441px;font-size:12px;color:#000;">1</span>
<span class="t" style="left:926.70px;top:441px;font-size:12px;color:#48709f;transform:scaleX(0.9771);">Service Control Spawned via Script...</span>
<span class="t" style="left:1142.00px;top:441px;font-size:12px;color:#48709f;transform:scaleX(0.9640);">Security</span>
<span class="t" style="left:1392.00px;top:443px;font-size:12px;color:#48709f;transform:scaleX(0.9916);">Низкий</span>
<span class="t" style="left:1462.90px;top:441px;font-size:12px;color:#48709f;transform:scaleX(0.9117);">AD</span>
<span class="t" style="left:1612.90px;top:441px;font-size:12px;color:#48709f;transform:scaleX(0.9888);">AD.pentest.net</span>
<span class="t" style="left:27.00px;top:467px;font-size:12px;color:#48709f;">loganalyzer...</span>
<span class="t" style="left:116.90px;top:467px;font-size:12px;color:#000;transform:scaleX(1.0057);">22 декабря, 13:06:56</span>
<span class="t" style="left:279.70px;top:467px;font-size:12px;color:#48709f;transform:scaleX(0.9096);">SEC-924</span>
<span class="t" style="left:511.00px;top:467px;font-size:12px;color:#000;transform:scaleX(1.0057);">22 декабря, 13:02:58</span>
<span class="t" style="left:651.00px;top:467px;font-size:12px;color:#000;transform:scaleX(1.0057);">22 декабря, 13:02:58</span>
<span class="t" style="left:791.00px;top:467px;font-size:12px;color:#000;">1</span>
<span class="t" style="left:926.70px;top:467px;font-size:12px;color:#48709f;transform:scaleX(1.0145);">Run binary file without meta data</span>
<span class="t" style="left:1142.00px;top:467px;font-size:12px;color:#48709f;transform:scaleX(0.9640);">Security</span>
<span class="t" style="left:1392.00px;top:469px;font-size:12px;color:#48709f;transform:scaleX(0.9499);">Норма...</span>
<span class="t" style="left:1462.90px;top:467px;font-size:12px;color:#48709f;transform:scaleX(0.9087);">USERWIN</span>
<span class="t" style="left:1612.90px;top:467px;font-size:12px;color:#48709f;transform:scaleX(0.9948);">UserWIN.pentest.net</span>
<span class="t" style="left:27.00px;top:493px;font-size:12px;color:#48709f;">loganalyzer...</span>
<span class="t" style="left:116.90px;top:493px;font-size:12px;color:#000;transform:scaleX(1.0057);">22 декабря, 13:06:56</span>
<span class="t" style="left:279.70px;top:493px;font-size:12px;color:#48709f;transform:scaleX(0.9096);">SEC-923</span>
<span class="t" style="left:511.00px;top:493px;font-size:12px;color:#000;transform:scaleX(1.0057);">22 декабря, 13:02:55</span>
<span class="t" style="left:651.00px;top:493px;font-size:12px;color:#000;transform:scaleX(1.0057);">22 декабря, 13:02:55</span>
<span class="t" style="left:791.00px;top:493px;font-size:12px;color:#000;">1</span>
<span class="t" style="left:926.70px;top:493px;font-size:12px;color:#48709f;transform:scaleX(1.0145);">Run binary file without meta data</span>
<span class="t" style="left:1142.00px;top:493px;font-size:12px;color:#48709f;transform:scaleX(0.9640);">Security</span>
<span class="t" style="left:1392.00px;top:495px;font-size:12px;color:#48709f;transform:scaleX(0.9499);">Норма...</span>
<span class="t" style="left:1462.90px;top:493px;font-size:12px;color:#48709f;transform:scaleX(0.9087);">USERWIN</span>
<span class="t" style="left:1612.90px;top:493px;font-size:12px;color:#48709f;transform:scaleX(0.9948);">UserWIN.pentest.net</span>
<span class="t" style="left:27.00px;top:519px;font-size:12px;color:#48709f;">loganalyzer...</span>
<span class="t" style="left:116.90px;top:519px;font-size:12px;color:#000;transform:scaleX(1.0057);">22 декабря, 13:06:56</span>
<span class="t" style="left:279.70px;top:519px;font-size:12px;color:#48709f;transform:scaleX(0.9096);">SEC-922</span>
<span class="t" style="left:511.00px;top:519px;font-size:12px;color:#000;transform:scaleX(1.0057);">22 декабря, 13:02:34</span>
<span class="t" style="left:651.00px;top:519px;font-size:12px;color:#000;transform:scaleX(1.0057);">22 декабря, 13:02:34</span>
<span class="t" style="left:791.00px;top:519px;font-size:12px;color:#000;">1</span>
<span class="t" style="left:926.70px;top:519px;font-size:12px;color:#48709f;transform:scaleX(1.0145);">Run binary file without meta data</span>
<span class="t" style="left:1142.00px;top:519px;font-size:12px;color:#48709f;transform:scaleX(0.9640);">Security</span>
<span class="t" style="left:1392.00px;top:521px;font-size:12px;color:#48709f;transform:scaleX(0.9499);">Норма...</span>
<span class="t" style="left:1462.90px;top:519px;font-size:12px;color:#48709f;transform:scaleX(0.9117);">AD</span>
<span class="t" style="left:1612.90px;top:519px;font-size:12px;color:#48709f;transform:scaleX(0.9888);">AD.pentest.net</span>
<span class="t" style="left:27.00px;top:545px;font-size:12px;color:#48709f;">loganalyzer...</span>
<span class="t" style="left:116.90px;top:545px;font-size:12px;color:#000;transform:scaleX(1.0057);">22 декабря, 13:06:56</span>
<span class="t" style="left:279.70px;top:545px;font-size:12px;color:#48709f;transform:scaleX(0.9096);">SEC-921</span>
<span class="t" style="left:511.00px;top:545px;font-size:12px;color:#000;transform:scaleX(1.0057);">22 декабря, 13:02:28</span>
<span class="t" style="left:651.00px;top:545px;font-size:12px;color:#000;transform:scaleX(1.0057);">22 декабря, 13:02:28</span>
<span class="t" style="left:791.00px;top:545px;font-size:12px;color:#000;">1</span>
<span class="t" style="left:926.70px;top:545px;font-size:12px;color:#48709f;transform:scaleX(1.0145);">Run binary file without meta data</span>
<span class="t" style="left:1142.00px;top:545px;font-size:12px;color:#48709f;transform:scaleX(0.9640);">Security</span>
<span class="t" style="left:1392.00px;top:547px;font-size:12px;color:#48709f;transform:scaleX(0.9499);">Норма...</span>
<span class="t" style="left:1462.90px;top:545px;font-size:12px;color:#48709f;transform:scaleX(0.9117);">AD</span>
<span class="t" style="left:1612.90px;top:545px;font-size:12px;color:#48709f;transform:scaleX(0.9888);">AD.pentest.net</span>
<span class="t" style="left:27.00px;top:571px;font-size:12px;color:#48709f;">loganalyzer...</span>
<span class="t" style="left:116.90px;top:571px;font-size:12px;color:#000;transform:scaleX(1.0057);">22 декабря, 08:18:00</span>
<span class="t" style="left:279.70px;top:571px;font-size:12px;color:#48709f;transform:scaleX(0.9096);">SEC-920</span>
<span class="t" style="left:511.00px;top:571px;font-size:12px;color:#000;transform:scaleX(1.0057);">22 декабря, 08:14:23</span>
<span class="t" style="left:651.00px;top:571px;font-size:12px;color:#000;transform:scaleX(1.0057);">22 декабря, 08:14:23</span>
<span class="t" style="left:791.00px;top:571px;font-size:12px;color:#000;">1</span>
<span class="t" style="left:926.70px;top:571px;font-size:12px;color:#48709f;transform:scaleX(1.0145);">Run binary file without meta data</span>
<span class="t" style="left:1142.00px;top:571px;font-size:12px;color:#48709f;transform:scaleX(0.9640);">Security</span>
<span class="t" style="left:1392.00px;top:573px;font-size:12px;color:#48709f;transform:scaleX(0.9499);">Норма...</span>
<span class="t" style="left:1462.90px;top:571px;font-size:12px;color:#48709f;transform:scaleX(0.9558);">WINDOWS-10-OFFI</span>
<span class="t" style="left:1612.90px;top:571px;font-size:12px;color:#48709f;transform:scaleX(0.9946);">Windows-10-office.pe...</span>
<span class="t" style="left:27.00px;top:597px;font-size:12px;color:#48709f;">loganalyzer...</span>
<span class="t" style="left:116.90px;top:597px;font-size:12px;color:#000;transform:scaleX(1.0057);">22 декабря, 08:13:30</span>
<span class="t" style="left:279.70px;top:597px;font-size:12px;color:#48709f;transform:scaleX(0.9096);">SEC-919</span>
<span class="t" style="left:511.00px;top:597px;font-size:12px;color:#000;transform:scaleX(1.0057);">22 декабря, 08:09:03</span>
<span class="t" style="left:651.00px;top:597px;font-size:12px;color:#000;transform:scaleX(1.0057);">22 декабря, 08:09:03</span>
<span class="t" style="left:791.00px;top:597px;font-size:12px;color:#000;">1</span>
<span class="t" style="left:926.70px;top:597px;font-size:12px;color:#48709f;transform:scaleX(0.9773);">Connection to WebService by a Sig...</span>
<span class="t" style="left:1142.00px;top:597px;font-size:12px;color:#48709f;transform:scaleX(0.9640);">Security</span>
<span class="t" style="left:1392.00px;top:599px;font-size:12px;color:#48709f;transform:scaleX(0.9499);">Норма...</span>
<span class="t" style="left:1462.90px;top:597px;font-size:12px;color:#48709f;transform:scaleX(0.9558);">WINDOWS-10-OFFI</span>
<span class="t" style="left:1612.90px;top:597px;font-size:12px;color:#48709f;transform:scaleX(0.9946);">Windows-10-office.pe...</span>
</body></html>
